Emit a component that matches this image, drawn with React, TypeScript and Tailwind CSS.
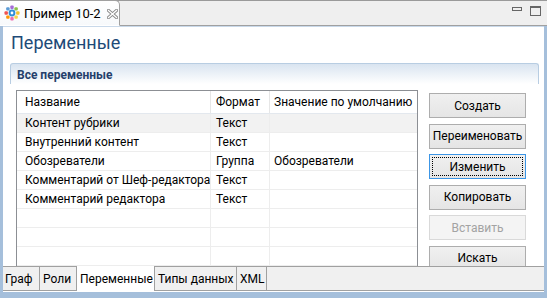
import React from "react";

const rows = [
  { name: "Контент рубрики", fmt: "Текст", def: "", hl: true },
  { name: "Внутренний контент", fmt: "Текст", def: "" },
  { name: "Обозреватели", fmt: "Группа", def: "Обозреватели" },
  { name: "Комментарий от Шеф-редактора", fmt: "Текст", def: "" },
  { name: "Комментарий редактора", fmt: "Текст", def: "" },
  { name: "", fmt: "", def: "" },
  { name: "", fmt: "", def: "" },
  { name: "", fmt: "", def: "" },
];

function TabIcon() {
  const dots = [
    { a: 0, c: "#f2c230" },
    { a: 45, c: "#8bc34a" },
    { a: 90, c: "#a46bd6" },
    { a: 135, c: "#5b9bd5" },
    { a: 180, c: "#ef5350" },
    { a: 225, c: "#ff9800" },
    { a: 270, c: "#ec6fb0" },
    { a: 315, c: "#f7d54a" },
  ];
  return (
    <svg width="16" height="16" viewBox="0 0 16 16">
      {dots.map((d, i) => {
        const r = 5.8;
        const x = 8 + r * Math.cos((d.a * Math.PI) / 180);
        const y = 8 - r * Math.sin((d.a * Math.PI) / 180);
        return <rect key={i} x={x - 1.7} y={y - 1.7} width="3.4" height="3.4" rx="1" fill={d.c} />;
      })}
      <circle cx="8" cy="8" r="3.4" fill="#2f8fd8" />
      <circle cx="8" cy="8" r="1.4" fill="#ffffff" />
    </svg>
  );
}

function CloseIcon() {
  return (
    <svg width="11" height="10" viewBox="0 0 11 10">
      <path d="M1.5 1.5 L9.5 8.5 M9.5 1.5 L1.5 8.5" stroke="#8a8a8a" strokeWidth="3.2" strokeLinecap="square" />
      <path d="M1.5 1.5 L9.5 8.5 M9.5 1.5 L1.5 8.5" stroke="#ffffff" strokeWidth="1.3" strokeLinecap="square" />
    </svg>
  );
}

function Btn({ label, focused, disabled }: { label: string; focused?: boolean; disabled?: boolean }) {
  const base = "h-[25px] w-[97px] shrink-0 flex items-center justify-center text-[12px] relative whitespace-nowrap";
  if (disabled)
    return (
      <div className={`${base} border border-[#d9d9d9] bg-[#f4f4f4] text-[#a3a3a3]`}>{label}</div>
    );
  if (focused)
    return (
      <div className={`${base} border border-[#3c96e6] bg-gradient-to-b from-[#f0f0f0] to-[#e5e5e5] text-black`}>
        <div className="absolute inset-[2px] border border-dotted border-black" />
        {label}
      </div>
    );
  return (
    <div className={`${base} border border-[#adadad] bg-gradient-to-b from-[#f0f0f0] to-[#e5e5e5] text-black`}>
      {label}
    </div>
  );
}

export default function App() {
  return (
    <div
      className="w-[547px] h-[298px] overflow-hidden flex flex-col bg-white text-black"
      style={{ fontFamily: 'Roboto, "Noto Sans", sans-serif' }}
    >
      {/* top editor tab strip */}
      <div className="h-[26px] shrink-0 bg-[#efefef] border-t border-[#9a9a9a] border-b border-b-[#a0a0a0] flex items-stretch relative">
        <div className="w-[120px] -mt-px -mb-px bg-gradient-to-b from-[#ffffff] to-[#f7f9fb] border-t border-r border-[#a0a0a0] rounded-tr-[5px] flex items-center pl-[4px] gap-[4px] border-b border-b-white whitespace-nowrap">
          <TabIcon />
          <span className="text-[13px] leading-none text-black">Пример 10-2</span>
          <span className="ml-[2px] mt-[1px] flex"><CloseIcon /></span>
        </div>
        <div className="flex-1" />
        <div className="flex items-start gap-[8px] pr-[6px] pt-[5px]">
          <div className="w-[10px] h-[4px] border border-[#666] mt-[1px]" />
          <div className="w-[11px] h-[10px] border border-[#666] border-t-[2px]" />
        </div>
      </div>

      {/* framed area */}
      <div className="flex-1 flex flex-col border-l-[3px] border-r-[3px] border-b-[6px] border-[#a5bfdb] min-h-0">
        {/* content */}
        <div className="h-[240px] shrink-0 overflow-hidden bg-white border-t border-[#c9d9ea]">
          <div className="pl-[8px] pt-[4px] h-[28px] text-[18px] leading-[24px] text-[#1e4a78] whitespace-nowrap">Переменные</div>
          <div className="mt-[8px] ml-[7px] mr-[5px] h-[21px] rounded-t-[3px] border border-b-0 border-[#b8cde2] bg-gradient-to-b from-[#d9e4f0] to-[#ffffff] flex items-center pl-[6px]">
            <span className="text-[12px] font-bold text-[#253f6b] leading-none whitespace-nowrap mt-[1px]">Все переменные</span>
          </div>
          <div className="flex mt-[6px] ml-[13px] gap-[11px]">
            {/* table */}
            <div className="w-[402px] h-[200px] shrink-0 border-l border-t border-r border-[#8c8f94] text-[12px] leading-none">
              <div className="flex h-[23px] border-b border-[#e3e8ee]">
                <div className="w-[194px] flex items-center pl-[8px] border-r border-[#e6e6e6] whitespace-nowrap">Название</div>
                <div className="w-[59px] flex items-center pl-[5px] border-r border-[#e6e6e6] whitespace-nowrap">Формат</div>
                <div className="flex-1 flex items-center pl-[4px] whitespace-nowrap overflow-hidden">Значение по умолчанию</div>
              </div>
              {rows.map((r, i) => (
                <div
                  key={i}
                  className={`flex h-[19px] border-b border-[#ededed] ${r.hl ? "bg-[#f2f2f2]" : ""}`}
                >
                  <div className="w-[194px] flex items-center pl-[8px] border-r border-[#ededed] whitespace-nowrap overflow-hidden">{r.name}</div>
                  <div className="w-[59px] flex items-center pl-[5px] border-r border-[#ededed] whitespace-nowrap">{r.fmt}</div>
                  <div className="flex-1 flex items-center pl-[4px] whitespace-nowrap">{r.def}</div>
                </div>
              ))}
            </div>
            {/* buttons */}
            <div className="flex flex-col gap-[5.5px] pt-[3px]">
              <Btn label="Создать" />
              <Btn label="Переименовать" />
              <Btn label="Изменить" focused />
              <Btn label="Копировать" />
              <Btn label="Вставить" disabled />
              <Btn label="Искать" />
            </div>
          </div>
        </div>

        {/* bottom tabs */}
        <div className="h-[25px] shrink-0 bg-[#f0f0f0] border-t border-[#a0a0a0] border-b border-b-[#a0a0a0] flex items-stretch text-[12px] whitespace-nowrap">
          <div className="w-[37px] pl-[2px] flex items-center border-r border-[#a0a0a0]">Граф</div>
          <div className="w-[37px] pl-[3px] flex items-center border-r border-[#a0a0a0]">Роли</div>
          <div className="w-[78px] pl-[3px] flex items-center bg-white border-r border-[#a0a0a0] -mt-px -mb-px">Переменные</div>
          <div className="w-[82px] pl-[3px] flex items-center border-r border-[#a0a0a0]">Типы данных</div>
          <div className="w-[30px] pl-[3px] flex items-center border-r border-[#a0a0a0]">XML</div>
        </div>
      </div>
    </div>
  );
}
